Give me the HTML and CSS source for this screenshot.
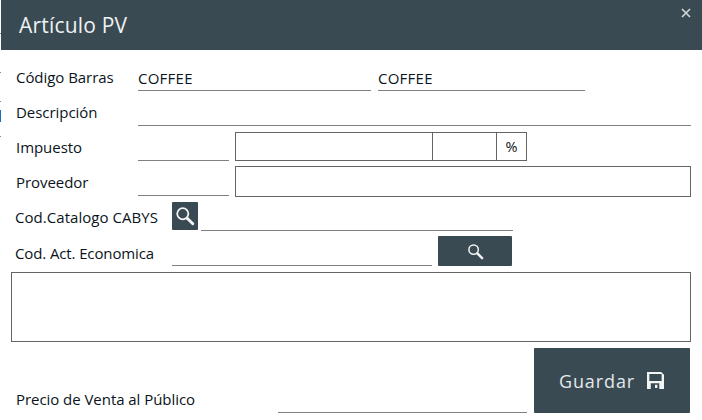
FILE: index.html
```html
<!DOCTYPE html>
<html lang="es">
<head>
<meta charset="utf-8">
<title>Artículo PV</title>
<link rel="stylesheet" href="styles.css">
</head>
<body>
<span class="edge edge-a"></span>
<span class="edge edge-b"></span>
<span class="edge edge-c"></span>
<span class="edge edge-d"></span>
<span class="edge edge-blue"></span>
<main class="dialog">
  <header class="titlebar">
    <h1 class="title">Artículo PV</h1>
    <svg class="close" viewBox="0 0 10 10" aria-label="Cerrar"><path d="M1 1L9 9M9 1L1 9"/></svg>
  </header>
  <div class="form">
    <div class="row row-codigo">
      <span class="label">Código Barras</span>
      <span class="line w-233 value">COFFEE</span>
      <span class="line w-207 ml-7 value">COFFEE</span>
    </div>
    <div class="row row-desc">
      <span class="label">Descripción</span>
      <span class="line w-553"></span>
    </div>
    <div class="row row-imp">
      <span class="label">Impuesto</span>
      <span class="line w-91"></span>
      <div class="boxgroup">
        <span class="cell cell-a"></span>
        <span class="cell cell-b"></span>
        <span class="cell cell-c">%</span>
      </div>
    </div>
    <div class="row row-prov">
      <span class="label">Proveedor</span>
      <span class="line w-91"></span>
      <span class="box-prov"></span>
    </div>
    <div class="row row-cabys">
      <span class="label label-tight w-171">Cod.Catalogo CABYS</span>
      <button class="iconbtn" aria-label="Buscar">
        <svg class="search" viewBox="0 0 18 18"><circle cx="7" cy="7" r="5"/><path class="handle" d="M11 11L16 16"/></svg>
      </button>
      <span class="line w-312 ml-3"></span>
    </div>
    <div class="row row-act">
      <span class="label label-tight w-171">Cod. Act. Economica</span>
      <span class="line w-260"></span>
      <button class="widebtn" aria-label="Buscar">
        <svg class="search" viewBox="0 0 18 18"><circle cx="7" cy="7" r="5"/><path class="handle" d="M11 11L16 16"/></svg>
      </button>
    </div>
    <div class="notes"></div>
    <div class="row row-precio">
      <span class="label w-262">Precio de Venta al Público</span>
      <span class="line w-249"></span>
      <button class="save">
        <span class="save-text">Guardar</span>
        <svg class="disk" viewBox="0 0 18 18"><path fill-rule="evenodd" d="M0 0H15L18 3V18H0ZM2.500 2V9.500H15.500V2ZM4 12V18H13V12ZM8.500 13.500H11V17H8.500Z"/></svg>
      </button>
    </div>
  </div>
</main>
</body>
</html>
```

FILE: styles.css
```css
* { box-sizing: border-box; }
html, body { margin: 0; padding: 0; }
body {
  width: 702px;
  height: 420px;
  overflow: hidden;
  background: #fff;
  font-family: "Open Sans", "Noto Sans", sans-serif;
  color: #0a1420;
  position: relative;
}
.edge { position: absolute; left: 0; width: 1px; background: #8a8a8a; height: 1px; }
.edge-a { top: 33px; }
.edge-b { top: 72px; }
.edge-c { top: 101px; }
.edge-d { top: 136px; }
.edge-blue { top: 110px; height: 12px; background: #1b6fc0; }
.dialog { margin-left: 1px; }
.titlebar {
  height: 50px;
  background: #3a4a52;
  display: flex;
  justify-content: space-between;
  padding: 0 11px 0 18px;
}
.title {
  margin: 11px 0 0;
  font-size: 21px;
  line-height: 28px;
  font-weight: 400;
  color: #eef1f2;
  letter-spacing: 0.200px;
}
.close { width: 10px; height: 10px; margin-top: 8px; }
.close path { stroke: #d0d5d8; stroke-width: 1.700; fill: none; }
.form { padding-left: 15px; }
.row { display: flex; align-items: flex-end; }
.label {
  font-size: 15px;
  line-height: 20px;
  width: 122px;
  flex: none;
  letter-spacing: -0.050px;
  align-self: flex-end;
}
.label-tight { margin-left: -1px; letter-spacing: 0.050px; }
.w-171 { width: 157px; }
.w-262 { width: 262px; }
.line { display: block; border-bottom: 1px solid #808080; flex: none; }
.value { font-size: 15px; line-height: 20px; letter-spacing: 0.250px; }
.w-233 { width: 233px; }
.w-207 { width: 207px; }
.w-553 { width: 553px; }
.w-91 { width: 91px; }
.w-312 { width: 312px; }
.w-260 { width: 260px; }
.w-249 { width: 249px; }
.ml-7 { margin-left: 7px; }
.ml-3 { margin-left: 3px; }
.row-codigo { margin-top: 18px; height: 23px; }
.row-codigo .label { padding-bottom: 4px; }
.row-codigo .value { padding-bottom: 4px; height: 23px; }
.row-desc { margin-top: 12px; height: 23px; }
.row-desc .line { height: 23px; }
.row-desc .label { margin-bottom: 4px; }
.row-imp .label { margin-bottom: 4px; }
.row-prov .label { margin-bottom: 5px; }
.row-imp { margin-top: 6px; height: 29px; }
.row-imp .line { height: 10px; margin-bottom: 0; }
.boxgroup {
  margin-left: 6px;
  display: flex;
  width: 292px;
  height: 29px;
  border: 1px solid #646464;
}
.cell { display: block; height: 100%; }
.cell-a { width: 197px; border-right: 1px solid #646464; }
.cell-b { width: 64px; border-right: 1px solid #646464; }
.cell-c { flex: 1; text-align: center; font-size: 14.500px; line-height: 27px; }
.row-prov { margin-top: 5px; height: 31px; }
.row-prov .line { height: 10px; margin-bottom: 1px; }
.box-prov {
  display: block;
  margin-left: 6px;
  width: 456px;
  height: 31px;
  border: 1px solid #646464;
}
.row-cabys { margin-top: 5px; height: 29px; }
.row-cabys .label { margin-bottom: 4px; }
.row-cabys .line { height: 10px; margin-bottom: 0; }
.iconbtn, .widebtn, .save {
  border: 0;
  padding: 0;
  margin: 0;
  background: #3a4a52;
  display: flex;
  align-items: center;
  justify-content: center;
  font-family: inherit;
  flex: none;
}
.iconbtn { width: 26px; height: 28px; border-radius: 1px; margin-bottom: 1px; }
.search { width: 20px; height: 20px; fill: none; stroke: #f2f4f5; stroke-width: 1.600; }
.handle { stroke-width: 2.600; stroke-linecap: round; }
.row-act { margin-top: 5px; height: 31px; }
.row-act .label { margin-bottom: 4px; letter-spacing: -0.120px; }
.row-act .line { height: 10px; margin-bottom: 1px; }
.widebtn { width: 74px; height: 30px; margin-left: 6px; border-radius: 1px; margin-bottom: 1px; }
.widebtn .search { width: 17px; height: 17px; }
.notes {
  margin-top: 5px;
  margin-left: -5px;
  width: 680px;
  height: 70px;
  border: 1px solid #646464;
}
.row-precio { margin-top: 6px; height: 65px; }
.row-precio .label { margin-bottom: 4px; }
.row-precio .line { margin-bottom: 0; height: 10px; }
.save {
  width: 156px;
  height: 65px;
  margin-left: 7px;
  padding-right: 1px;
  border-radius: 1px;
  color: #e4e8ea;
  gap: 12px;
}
.save-text { font-size: 18px; line-height: 24px; letter-spacing: 0.900px; font-weight: 400; }
.disk { width: 17px; height: 17px; fill: #f2f4f5; }
```
